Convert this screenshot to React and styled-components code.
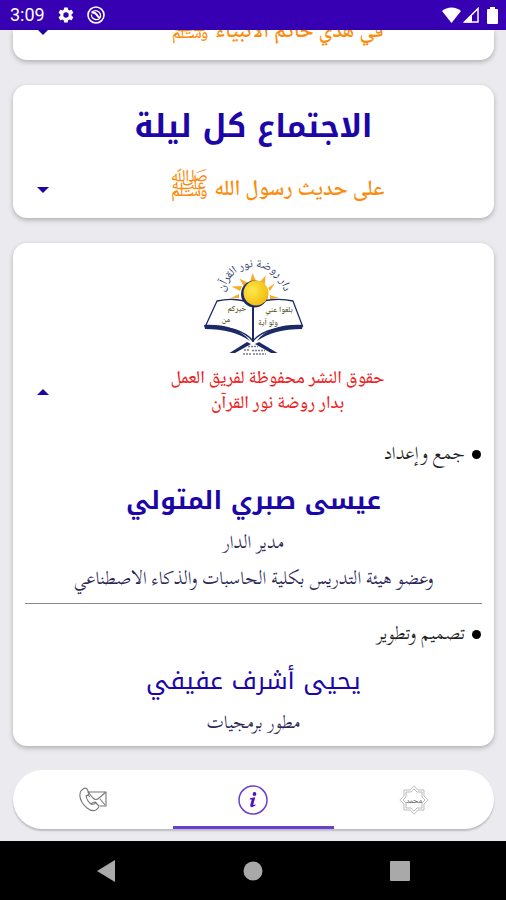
import React, { useState } from 'react';
import styled, { createGlobalStyle } from 'styled-components';

const COLOR = {
  BAR: '#3700b3',
  PRIMARY: '#1c06a8',
  ORANGE: '#fb8c0c',
  RED: '#ee2222',
  INK: '#2b2857',
  NAVY: '#1b2a66',
  PAGE: '#ebeaef',
  ACCENT: '#6a3fd0',
};

const FONT = {
  KUFI: "'Noto Kufi Arabic', 'DejaVu Sans', sans-serif",
  NASKH: "'Noto Naskh Arabic', 'DejaVu Sans', sans-serif",
  BOOK: "'Scheherazade New', 'Noto Naskh Arabic', serif",
};

const GlobalStyle = createGlobalStyle`
  * {
    box-sizing: border-box;
  }

  body {
    margin: 0;
    background: ${COLOR.PAGE};
    font-family: ${FONT.NASKH};
  }

  h2, h3, p {
    margin: 0;
  }

  button {
    border: 0;
    padding: 0;
    background: none;
    cursor: pointer;
    font: inherit;
  }
`;

const Screen = styled.div`
  min-height: 100vh;
  display: flex;
  flex-direction: column;
`;

const StatusBar = styled.header`
  height: 30px;
  padding: 0 8px 0 10px;
  display: flex;
  align-items: center;
  gap: 12px;
  background: ${COLOR.BAR};
  color: #fff;
  font-family: Roboto, sans-serif;
`;

const Time = styled.time`
  font-size: 18px;
  line-height: 30px;
`;

const StatusRight = styled.div`
  margin-left: auto;
  display: flex;
  align-items: center;
  gap: 2px;

  svg:last-child {
    margin-left: 6px;
  }
`;

const Feed = styled.main`
  flex: 1;
  padding: 0 12px 0 13px;
  display: flex;
  flex-direction: column;
  gap: 25px;
`;

const Card = styled.section`
  background: #fff;
  border-radius: 14px;
  box-shadow: 0 2px 5px rgba(0, 0, 0, 0.26);
`;

const CutCard = styled(Card)`
  height: 30px;
  overflow: hidden;
  display: flex;
  flex-direction: column;
  justify-content: flex-end;
  padding-bottom: 8px;
  border-radius: 0 0 14px 14px;
`;

const CardTitle = styled.h2`
  padding-top: 12px;
  color: ${COLOR.PRIMARY};
  font-family: ${FONT.KUFI};
  font-size: 31px;
  line-height: 60px;
  font-weight: 700;
  text-align: center;
`;

const HeaderRow = styled.div`
  display: flex;
  align-items: center;
  padding-right: 12px;
  padding-top: ${(props) => props.$top || 0}px;
  padding-bottom: ${(props) => props.$bottom || 0}px;
`;

const Subtitle = styled.p`
  flex: 1;
  display: flex;
  align-items: center;
  justify-content: center;
  gap: 6px;
  height: 40px;
  color: ${COLOR.ORANGE};
  font-size: 22px;
  line-height: 40px;
  font-weight: 600;
`;

const Salawat = styled.span`
  font-size: 31px;
  line-height: 40px;
`;

const Rights = styled.p`
  flex: 1;
  color: ${COLOR.RED};
  font-size: 18px;
  line-height: 25px;
  font-weight: 500;
  text-align: center;
`;

const ArrowButton = styled.button`
  width: 60px;
  height: 40px;
  display: flex;
  align-items: center;
  justify-content: center;

  svg {
    transform: ${(props) => (props.$open ? 'scaleY(-1)' : 'none')};
  }
`;

const LogoWrap = styled.div`
  display: flex;
  justify-content: center;
  padding-top: 17px;
  padding-bottom: 10px;
`;

const Details = styled.div`
  padding: 0 12px 5px;
`;

const SectionTitle = styled.h3`
  display: flex;
  align-items: center;
  gap: 7px;
  margin: 12px 0 5px;
  color: #222;
  font-family: ${FONT.BOOK};
  font-size: 18px;
  line-height: 36px;
  font-weight: 400;

  &::before {
    content: '';
    width: 9px;
    height: 9px;
    margin-right: 1px;
    border-radius: 50%;
    background: #000;
  }
`;

const Person = styled.p`
  color: ${COLOR.PRIMARY};
  font-family: ${FONT.KUFI};
  font-size: 25px;
  line-height: 48px;
  font-weight: ${(props) => (props.$bold ? 700 : 400)};
  text-align: center;
`;

const Role = styled.p`
  color: ${COLOR.INK};
  font-family: ${FONT.BOOK};
  font-size: 18px;
  line-height: 36px;
  text-align: center;
`;

const Divider = styled.hr`
  height: 1px;
  margin: 6px 0 0;
  border: 0;
  background: #8a8a8a;
`;

const TabBar = styled.nav`
  margin: 24px 12px 12px 13px;
  height: 59px;
  display: flex;
  border-radius: 30px;
  background: #fff;
  box-shadow: 0 2px 2px rgba(0, 0, 0, 0.2);
`;

const Tab = styled.button`
  flex: 1;
  display: flex;
  align-items: center;
  justify-content: center;
  border-top: 3px solid transparent;
  border-bottom: 3px solid ${(props) => (props.$active ? COLOR.ACCENT : 'transparent')};
`;

const SystemBar = styled.footer`
  height: 59px;
  padding: 0 33px;
  display: grid;
  grid-template-columns: repeat(3, 1fr);
  background: #000;
`;

const SystemButton = styled.button`
  display: flex;
  align-items: center;
  justify-content: center;
`;

const Arrow = ({ open, label, onClick }) => (
  <ArrowButton $open={open} aria-expanded={open} aria-label={label} onClick={onClick}>
    <svg width="12" height="6" viewBox="0 0 12 6">
      <path d="M0 0H12L6 6Z" fill={COLOR.PRIMARY} />
    </svg>
  </ArrowButton>
);

const GearIcon = () => (
  <svg width="18" height="18" viewBox="0 0 24 24" fill="#fff">
    <path d="M19.4 13a7.500 7.500 0 0 0 0-2l2.100-1.600a.5.5 0 0 0 .1-.6l-2-3.500a.5.5 0 0 0-.6-.2l-2.500 1a7.300 7.300 0 0 0-1.700-1L14.400 2.400a.5.5 0 0 0-.5-.4h-4a.5.5 0 0 0-.5.4L9 5.100a7.700 7.700 0 0 0-1.700 1l-2.500-1a.5.5 0 0 0-.6.2l-2 3.500a.5.5 0 0 0 .1.6L4.500 11a7.500 7.500 0 0 0 0 2l-2.200 1.600a.5.5 0 0 0-.1.600l2 3.500c.1.200.4.300.6.200l2.500-1c.5.4 1.100.7 1.700 1l.4 2.700c0 .2.200.4.500.4h4c.3 0 .5-.2.5-.4l.4-2.700c.6-.3 1.200-.6 1.700-1l2.500 1c.2.100.5 0 .6-.2l2-3.500a.5.5 0 0 0-.1-.6ZM12 15.600a3.600 3.600 0 1 1 0-7.200 3.600 3.600 0 0 1 0 7.200Z" />
  </svg>
);

const RoundIcon = () => (
  <svg width="18" height="18" viewBox="0 0 18 18" fill="none" stroke="#fff">
    <circle cx="9" cy="9" r="8" strokeWidth="1.600" />
    <path d="M5 6C8 3.500 12.500 4.500 13.500 8.500S11 14 8.500 13.500 4 11 4.500 8.500" strokeWidth="1.300" />
    <path d="M4.500 6.500Q8 6 9.500 8.500T13 12" strokeWidth="2.200" />
  </svg>
);

const WifiIcon = () => (
  <svg width="19" height="16" viewBox="0 0 19 16">
    <path d="M0 4C5-.8 14-.8 19 4L9.500 16Z" fill="#fff" />
  </svg>
);

const SignalIcon = () => (
  <svg width="16" height="16" viewBox="0 0 16 16">
    <path d="M1.500 15L15 1.500V15Z" fill="none" stroke="#fff" strokeWidth="1.500" />
    <path d="M1 15.500L9 7.500V15.500Z" fill="#fff" />
  </svg>
);

const BatteryIcon = () => (
  <svg width="11" height="17" viewBox="0 0 11 17">
    <path d="M3 0H8V2H10Q11 2 11 3V16Q11 17 10 17H1Q0 17 0 16V3Q0 2 1 2H3Z" fill="#fff" />
  </svg>
);

const RAYS = [
  'M46 22L48.500 13L52 21Z',
  'M40 27L35.500 18.500L44 23Z',
  'M36 31L27.500 26.500L38 26Z',
  'M35 38L26 38.500L35 34Z',
  'M56 22L61.500 15.500L61 24Z',
  'M64 28L71 23L66 31Z',
  'M66 35L75 38L66 39Z',
];

const Logo = () => (
  <svg width="100" height="97" viewBox="0 0 100 97" overflow="visible" role="img" aria-label="دار روضة نور القرآن">
    <defs>
      <radialGradient id="sun" cx="0.35" cy="0.4" r="0.7">
        <stop offset="0" stopColor="#ffe94a" />
        <stop offset="1" stopColor="#f2b90c" />
      </radialGradient>
      <path id="arch" d="M20 32A30.500 30.500 0 0 1 80 32" />
    </defs>
    <text fontSize="12" fill="#33406f" textAnchor="middle" direction="rtl">
      <textPath href="#arch" startOffset="50%">دار روضة نور القرآن</textPath>
    </text>
    {RAYS.map((d) => (
      <path key={d} d={d} fill="#f7ad25" />
    ))}
    <path
      d="M13 41C26 38 41 39 49 46C57 39 76 38 89 41L98.500 66C78 66 58 70 49 81C40 70 21 66 1.500 66Z"
      fill="#fff"
      stroke={COLOR.NAVY}
      strokeWidth="1.300"
    />
    <circle cx="50.500" cy="34" r="13.500" fill={COLOR.NAVY} />
    <circle cx="52" cy="33" r="12.500" fill="url(#sun)" />
    <path d="M49 46V82" stroke={COLOR.NAVY} strokeWidth="2" />
    <path d="M0 65C18 64 36 68 46 81C35 73 20 69 1 69Z" fill={COLOR.NAVY} />
    <path d="M99 65C81 64 62 68 53 81C64 73 79 69 98 69Z" fill={COLOR.NAVY} />
    <path d="M43 82L47 84L31 93H25.500Z" fill={COLOR.NAVY} />
    <path d="M55 82L51 84L67 93H73.500Z" fill={COLOR.NAVY} />
    <g fill="#55562c" fontSize="8" fontWeight="600" textAnchor="middle">
      <text x="33" y="51">خيركم</text>
      <text x="22" y="62">من</text>
      <text x="75" y="52">بلغوا عني</text>
      <text x="64" y="65">ولو آية</text>
    </g>
    <path
      d="M44 86.500H54M40 90H46M48 90.500H61M39 94H47M49 94H62"
      stroke="#777b8d"
      strokeWidth="1.400"
      strokeDasharray="2 1"
    />
  </svg>
);

const ContactIcon = () => (
  <svg width="28" height="25" viewBox="0 0 28 25" fill="none" stroke="#777" strokeWidth="1.100" strokeLinejoin="round">
    <path d="M8.500 5H27V19H21" />
    <path d="M9 5L14 11Q17 14 20 11L27 5" />
    <path d="M21 12L26 18" />
    <path d="M3 3Q6 0 8 2L10 6Q10 8 7 9Q8 14 12 17Q14 15 16 15L20 19Q20 21 17 23Q13 25 8 21Q0 14 1 7Q1 4 3 3Z" />
    <path d="M7 9Q9 7 11 10M12 17Q16 18 17 15" />
  </svg>
);

const InfoIcon = () => (
  <svg width="32" height="32" viewBox="0 0 32 32" fill="none">
    <circle cx="16" cy="16" r="14" stroke={COLOR.ACCENT} strokeWidth="1.500" />
    <circle cx="17.500" cy="10" r="1.900" fill="#5210c9" />
    <path d="M13 14.200L18.300 13.300L16.300 20.500Q16.200 21.600 18.600 20.200L18.400 21.500Q12.600 25 13.300 21L14.700 15.500H12.800Z" fill="#5210c9" />
  </svg>
);

const StarIcon = () => (
  <svg width="30" height="30" viewBox="0 0 30 30" fill="none" stroke="#aaa" strokeWidth="0.800">
    <path d="M15 .8L19 5H25V11L29.200 15L25 19V25H19L15 29.200L11 25H5V19L.8 15L5 11V5H11Z" />
    <path d="M15 4L18 7H23V12L26 15L23 18V23H18L15 26L12 23H7V18L4 15L7 12V7H12Z" />
    <text x="15" y="18" fontSize="8" fill="#555" stroke="none" textAnchor="middle">محمد</text>
  </svg>
);

const TABS = [
  { id: 'contact', label: 'اتصل بنا', Icon: ContactIcon },
  { id: 'about', label: 'عن التطبيق', Icon: InfoIcon },
  { id: 'home', label: 'الرئيسية', Icon: StarIcon },
];

const App = () => {
  const [tab, setTab] = useState('about');
  const [aboutOpen, setAboutOpen] = useState(true);
  const [meetingOpen, setMeetingOpen] = useState(false);

  return (
    <Screen>
      <GlobalStyle />
      <StatusBar>
        <Time>3:09</Time>
        <GearIcon />
        <RoundIcon />
        <StatusRight>
          <WifiIcon />
          <SignalIcon />
          <BatteryIcon />
        </StatusRight>
      </StatusBar>

      <Feed dir="rtl">
        <CutCard>
          <HeaderRow>
            <Subtitle>
              في هدي خاتم الأنبياء <Salawat>ﷺ</Salawat>
            </Subtitle>
            <Arrow open={false} label="عرض" />
          </HeaderRow>
        </CutCard>

        <Card>
          <CardTitle>الاجتماع كل ليلة</CardTitle>
          <HeaderRow $top={13} $bottom={8}>
            <Subtitle>
              على حديث رسول الله <Salawat>ﷺ</Salawat>
            </Subtitle>
            <Arrow open={meetingOpen} label="عرض" onClick={() => setMeetingOpen(!meetingOpen)} />
          </HeaderRow>
        </Card>

        <Card>
          <LogoWrap>
            <Logo />
          </LogoWrap>
          <HeaderRow $bottom={7}>
            <Rights>
              حقوق النشر محفوظة لفريق العمل
              <br />
              بدار روضة نور القرآن
            </Rights>
            <Arrow open={aboutOpen} label="إخفاء" onClick={() => setAboutOpen(!aboutOpen)} />
          </HeaderRow>
          {aboutOpen && (
            <Details>
              <SectionTitle>جمع وإعداد</SectionTitle>
              <Person $bold>عيسى صبري المتولي</Person>
              <Role>مدير الدار</Role>
              <Role>وعضو هيئة التدريس بكلية الحاسبات والذكاء الاصطناعي</Role>
              <Divider />
              <SectionTitle>تصميم وتطوير</SectionTitle>
              <Person>يحيى أشرف عفيفي</Person>
              <Role>مطور برمجيات</Role>
            </Details>
          )}
        </Card>
      </Feed>

      <TabBar>
        {TABS.map(({ id, label, Icon }) => (
          <Tab key={id} $active={tab === id} aria-label={label} onClick={() => setTab(id)}>
            <Icon />
          </Tab>
        ))}
      </TabBar>

      <SystemBar>
        <SystemButton aria-label="Back">
          <svg width="18" height="22" viewBox="0 0 18 22">
            <path d="M18 0V22L0 11Z" fill="#a9a9a9" />
          </svg>
        </SystemButton>
        <SystemButton aria-label="Home">
          <svg width="20" height="20" viewBox="0 0 20 20">
            <circle cx="10" cy="10" r="9.500" fill="#a9a9a9" />
          </svg>
        </SystemButton>
        <SystemButton aria-label="Recent">
          <svg width="20" height="20" viewBox="0 0 20 20">
            <rect width="20" height="20" rx="1" fill="#a9a9a9" />
          </svg>
        </SystemButton>
      </SystemBar>
    </Screen>
  );
};

export default App;
